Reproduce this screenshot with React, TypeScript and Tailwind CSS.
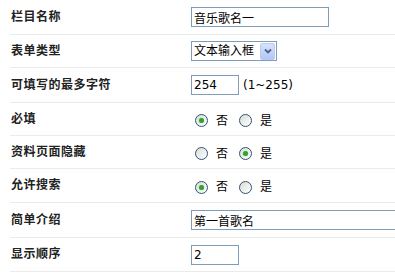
import React from "react";

const FONT = { fontFamily: '"DejaVu Sans", "Noto Sans CJK SC", sans-serif' };

function Row({ label, h, children }: { label: string; h: string; children: React.ReactNode }) {
  return (
    <div className={`flex items-center border-b border-[#ebebeb] ${h}`}>
      <div
        className="w-[181px] shrink-0 pl-[1px] pb-[3px] text-[12px] font-bold tracking-[0.5px] text-[#222]"
        style={{ fontFamily: '"Noto Sans CJK SC", sans-serif' }}
      >
        {label}
      </div>
      <div className="flex items-center text-[12px] text-black">{children}</div>
    </div>
  );
}

function TextBox({ value, w }: { value: string; w: string }) {
  return (
    <input
      readOnly
      value={value}
      className={`${w} h-[20px] shrink-0 border border-[#7f9db9] bg-white px-[2px] text-[12px] text-black outline-none`}
      style={FONT}
    />
  );
}

function Radio({ on }: { on?: boolean }) {
  return (
    <span className="flex h-[13px] w-[13px] items-center justify-center rounded-full border border-[#2f5376] bg-gradient-to-br from-[#dcdcd6] to-white">
      {on && <span className="h-[5px] w-[5px] rounded-full bg-[#2fa52f] shadow-[0_0_1px_#6fd36f]" />}
    </span>
  );
}

function YesNo({ yes }: { yes?: boolean }) {
  return (
    <div className="flex items-center pl-[4px] pt-[3px]">
      <Radio on={!yes} />
      <span className="ml-[8px]">否</span>
      <span className="ml-[11px]">
        <Radio on={yes} />
      </span>
      <span className="ml-[8px]">是</span>
    </div>
  );
}

export default function App() {
  return (
    <div className="h-[279px] w-[395px] overflow-hidden bg-white pl-[10px]" style={FONT}>
      <Row label="栏目名称" h="h-[35px]">
        <TextBox value="音乐歌名一" w="w-[138px]" />
      </Row>
      <Row label="表单类型" h="h-[33px]">
        <div className="flex h-[20px] w-[86px] items-center border border-[#7f9db9] bg-white pl-[2px]">
          <span className="flex-1">文本输入框</span>
          <span className="mr-[1px] flex h-[17px] w-[15px] items-center justify-center rounded-[2px] border border-[#b9cbf3] bg-gradient-to-b from-[#d6e2fd] to-[#b2c7f7]">
            <svg width="8" height="6" viewBox="0 0 8 6">
              <path d="M1 1.5 L4 4.5 L7 1.5" fill="none" stroke="#4d6185" strokeWidth="1.8" />
            </svg>
          </span>
        </div>
      </Row>
      <Row label="可填写的最多字符" h="h-[35px]">
        <TextBox value="254" w="w-[48px]" />
        <span className="ml-[4px]">(1~255)</span>
      </Row>
      <Row label="必填" h="h-[33px]">
        <YesNo />
      </Row>
      <Row label="资料页面隐藏" h="h-[33px]">
        <YesNo yes />
      </Row>
      <Row label="允许搜索" h="h-[34px]">
        <YesNo />
      </Row>
      <Row label="简单介绍" h="h-[35px]">
        <TextBox value="第一首歌名" w="w-[260px]" />
      </Row>
      <Row label="显示顺序" h="h-[34px]">
        <TextBox value="2" w="w-[48px]" />
      </Row>
    </div>
  );
}
